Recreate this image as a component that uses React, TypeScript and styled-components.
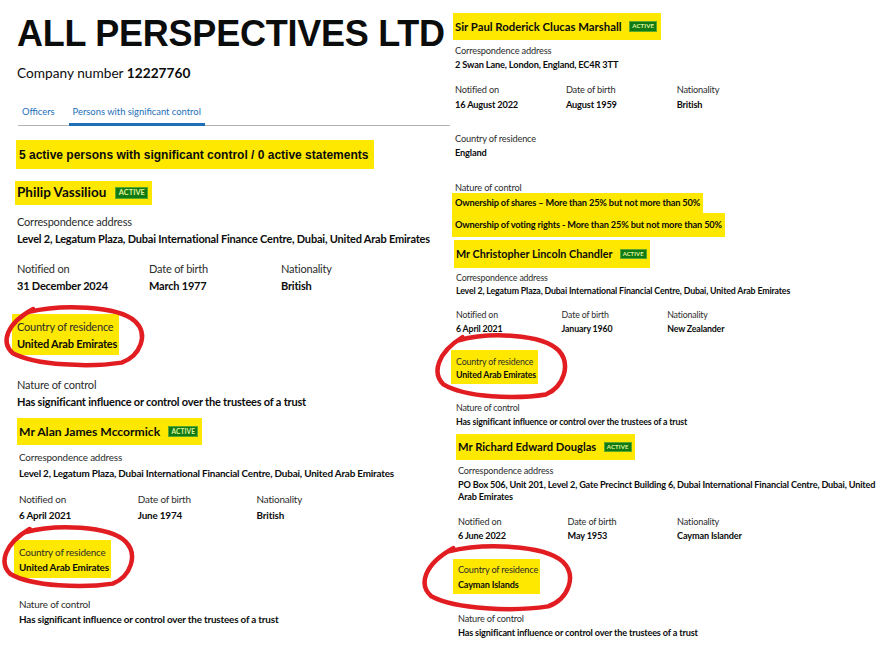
import React from "react";
import styled, { createGlobalStyle } from "styled-components";

const GlobalStyle = createGlobalStyle`
  html, body {
    margin: 0;
    padding: 0;
    background: #ffffff;
  }
  body {
    font-family: Lato, "Noto Sans", sans-serif;
    color: #0b0c0c;
  }
`;

const YELLOW = "#fee800";

const Page = styled.div`
  display: flex;
  width: 894px;
  height: 652px;
  overflow: hidden;
`;

const LeftColumn = styled.div`
  width: 452px;
  flex-shrink: 0;
  padding-left: 17px;
  box-sizing: border-box;
`;

const RightColumn = styled.div`
  flex: 1;
  padding: 13px 0 0 3px;
`;

const Title = styled.h1`
  margin: 14px 0 0;
  font-family: "Liberation Sans", Arial, sans-serif;
  font-weight: 700;
  font-size: 36px;
  line-height: 40px;
  letter-spacing: -0.25px;
  white-space: nowrap;
`;

const CompanyNumber = styled.p`
  margin: 9px 0 0;
  font-size: 13.7px;
  line-height: 20px;

  b {
    font-weight: 700;
  }
`;

const TabList = styled.ul`
  display: flex;
  gap: 10px;
  width: 432px;
  margin: 22px 0 0 1px;
  padding: 0;
  list-style: none;
  border-bottom: 1px solid #b1b4b6;
`;

const Tab = styled.li<{ $active?: boolean }>`
  padding: 0 4px 4px;
  margin-bottom: -1px;
  font-size: 9.4px;
  line-height: 14px;
  color: #1d70b8;
  border-bottom: 3px solid ${(p) => (p.$active ? "#1d70b8" : "transparent")};
`;

const Summary = styled.div`
  width: fit-content;
  height: 28px;
  margin: 14px 0 0 -1px;
  padding: 1px 6px 0 3px;
  background: ${YELLOW};
  font-family: "Liberation Sans", Arial, sans-serif;
  font-weight: 700;
  font-size: 12px;
  line-height: 28px;
  white-space: nowrap;
`;

const CardWrap = styled.section<{ $s: number; $top: number; $indent: number }>`
  --s: ${(p) => p.$s};
  margin: ${(p) => p.$top}px 0 0 ${(p) => p.$indent}px;
`;

const NameBar = styled.div<{ $h: number }>`
  display: flex;
  align-items: center;
  gap: calc(9px * var(--s));
  width: fit-content;
  height: ${(p) => p.$h}px;
  margin-left: -2px;
  padding: 0 calc(4px * var(--s)) 0 2px;
  background: ${YELLOW};
`;

const Name = styled.h2`
  margin: 0;
  font-size: calc(13.5px * var(--s));
  font-weight: 700;
  line-height: 1;
  white-space: nowrap;
`;

const Badge = styled.span`
  display: inline-block;
  height: calc(10px * var(--s));
  padding: 0 calc(2.5px * var(--s));
  background: #107a14;
  border: 1px solid #5aa72a;
  color: #e3f59c;
  font-size: calc(7.3px * var(--s));
  font-weight: 700;
  line-height: calc(10px * var(--s));
  letter-spacing: 0.1px;
`;

const Field = styled.div<{ $gap: number }>`
  margin-top: calc(${(p) => p.$gap}px * var(--s));
`;

const FirstField = styled.div<{ $gap: number }>`
  margin-top: ${(p) => p.$gap}px;
`;

const Label = styled.div`
  font-size: calc(11px * var(--s));
  line-height: calc(19.5px * var(--s));
  letter-spacing: calc(-0.2px * var(--s));
  color: #2b2c2c;
  white-space: nowrap;
`;

const Value = styled.div`
  font-size: calc(11px * var(--s));
  font-weight: 700;
  line-height: calc(14.5px * var(--s));
  letter-spacing: calc(-0.2px * var(--s));
  white-space: nowrap;
`;

const DetailsRow = styled.div`
  display: grid;
  grid-template-columns: repeat(3, calc(132px * var(--s)));
  margin-top: calc(13px * var(--s));
`;

const Mark = styled.div`
  position: relative;
  width: fit-content;
  margin: -3.5px -2px -3.5px -5px;
  padding: 3.5px 2px 3.5px 5px;
  background: ${YELLOW};
`;

const NatureList = styled.div`
  margin: -3px 0 0 -3px;
`;

const NatureMark = styled.div<{ $pt: number; $pb: number }>`
  width: fit-content;
  padding: ${(p) => p.$pt}px 3px ${(p) => p.$pb}px 3px;
  background: ${YELLOW};
`;

const CircleSvg = styled.svg`
  position: absolute;
  overflow: visible;
  pointer-events: none;
`;

interface CircleBox {
  left: number;
  top: number;
  w: number;
  h: number;
}

// hand drawn red loop around the country of residence
const loopPath = (w: number, h: number) => {
  const pad = 2;
  const W = w - pad * 2;
  const H = h - pad * 2;
  const X = (u: number) => (pad + u * W).toFixed(1);
  const Y = (v: number) => (pad + v * H).toFixed(1);
  return [
    `M${X(0.17)} ${Y(0.1)}`,
    `C${X(0.4)} ${Y(-0.03)} ${X(0.82)} ${Y(-0.01)} ${X(0.95)} ${Y(0.26)}`,
    `C${X(1.05)} ${Y(0.48)} ${X(0.99)} ${Y(0.84)} ${X(0.85)} ${Y(0.96)}`,
    `C${X(0.62)} ${Y(1.04)} ${X(0.22)} ${Y(1.01)} ${X(0.05)} ${Y(0.8)}`,
    `C${X(-0.04)} ${Y(0.62)} ${X(0.0)} ${Y(0.3)} ${X(0.2)} ${Y(0.05)}`,
  ].join(" ");
};

const HandCircle = ({ box }: { box: CircleBox }) => (
  <CircleSvg
    width={box.w}
    height={box.h}
    style={{ left: box.left, top: box.top }}
    viewBox={`0 0 ${box.w} ${box.h}`}
  >
    <path
      d={loopPath(box.w, box.h)}
      fill="none"
      stroke="#e21d22"
      strokeWidth={4.5}
      strokeLinecap="round"
    />
  </CircleSvg>
);

interface CardProps {
  s: number;
  barH: number;
  top: number;
  indent: number;
  name: string;
  address: React.ReactNode;
  notified: string;
  dob: string;
  nationality: string;
  country: string;
  circle?: CircleBox;
  nature: string[];
  natureMarked?: boolean;
}

const PersonCard = (props: CardProps) => {
  const firstGap = 18.25 * props.s - props.barH / 2 + 1;
  const countryBody = (
    <>
      <Label>Country of residence</Label>
      <Value>{props.country}</Value>
    </>
  );
  return (
    <CardWrap $s={props.s} $top={props.top} $indent={props.indent}>
      <NameBar $h={props.barH}>
        <Name>{props.name}</Name>
        <Badge>ACTIVE</Badge>
      </NameBar>
      <FirstField $gap={firstGap}>
        <Label>Correspondence address</Label>
        <Value>{props.address}</Value>
      </FirstField>
      <DetailsRow>
        <div>
          <Label>Notified on</Label>
          <Value>{props.notified}</Value>
        </div>
        <div>
          <Label>Date of birth</Label>
          <Value>{props.dob}</Value>
        </div>
        <div>
          <Label>Nationality</Label>
          <Value>{props.nationality}</Value>
        </div>
      </DetailsRow>
      <Field $gap={24}>
        {props.circle ? (
          <Mark>
            {countryBody}
            <HandCircle box={props.circle} />
          </Mark>
        ) : (
          countryBody
        )}
      </Field>
      <Field $gap={24}>
        <Label>Nature of control</Label>
        {props.natureMarked ? (
          <NatureList>
            {props.nature.map((item, i) => (
              <NatureMark key={i} $pt={i === 0 ? 4 : 5.5} $pb={i === 0 ? 4 : 6}>
                <Value>{item}</Value>
              </NatureMark>
            ))}
          </NatureList>
        ) : (
          props.nature.map((item, i) => <Value key={i}>{item}</Value>)
        )}
      </Field>
    </CardWrap>
  );
};

const TRUST = "Has significant influence or control over the trustees of a trust";

export default function App() {
  return (
    <>
      <GlobalStyle />
      <Page>
        <LeftColumn>
          <Title>ALL PERSPECTIVES LTD</Title>
          <CompanyNumber>
            Company number <b>12227760</b>
          </CompanyNumber>
          <TabList>
            <Tab>Officers</Tab>
            <Tab $active>Persons with significant control</Tab>
          </TabList>
          <Summary>5 active persons with significant control / 0 active statements</Summary>
          <PersonCard
            s={1}
            barH={24}
            top={12}
            indent={0}
            name="Philip Vassiliou"
            address="Level 2, Legatum Plaza, Dubai International Finance Centre, Dubai, United Arab Emirates"
            notified="31 December 2024"
            dob="March 1977"
            nationality="British"
            country="United Arab Emirates"
            circle={{ left: -8, top: -10, w: 140, h: 63 }}
            nature={[TRUST]}
          />
          <PersonCard
            s={0.9}
            barH={27}
            top={9}
            indent={2}
            name="Mr Alan James Mccormick"
            address="Level 2, Legatum Plaza, Dubai International Financial Centre, Dubai, United Arab Emirates"
            notified="6 April 2021"
            dob="June 1974"
            nationality="British"
            country="United Arab Emirates"
            circle={{ left: -12, top: -16, w: 132, h: 64 }}
            nature={[TRUST]}
          />
        </LeftColumn>
        <RightColumn>
          <PersonCard
            s={0.84}
            barH={27}
            top={0}
            indent={0}
            name="Sir Paul Roderick Clucas Marshall"
            address="2 Swan Lane, London, England, EC4R 3TT"
            notified="16 August 2022"
            dob="August 1959"
            nationality="British"
            country="England"
            natureMarked
            nature={[
              "Ownership of shares – More than 25% but not more than 50%",
              "Ownership of voting rights - More than 25% but not more than 50%",
            ]}
          />
          <PersonCard
            s={0.8}
            barH={28}
            top={3}
            indent={1}
            name="Mr Christopher Lincoln Chandler"
            address="Level 2, Legatum Plaza, Dubai International Financial Centre, Dubai, United Arab Emirates"
            notified="6 April 2021"
            dob="January 1960"
            nationality="New Zealander"
            country="United Arab Emirates"
            circle={{ left: -16, top: -18, w: 132, h: 67 }}
            nature={[TRUST]}
          />
          <PersonCard
            s={0.83}
            barH={26}
            top={7}
            indent={3}
            name="Mr Richard Edward Douglas"
            address={
              <>
                PO Box 506, Unit 201, Level 2, Gate Precinct Building 6, Dubai International Financial Centre, Dubai, United
                <br />
                Arab Emirates
              </>
            }
            notified="6 June 2022"
            dob="May 1953"
            nationality="Cayman Islander"
            country="Cayman Islands"
            circle={{ left: -31, top: -16, w: 150, h: 68 }}
            nature={[TRUST]}
          />
        </RightColumn>
      </Page>
    </>
  );
}
